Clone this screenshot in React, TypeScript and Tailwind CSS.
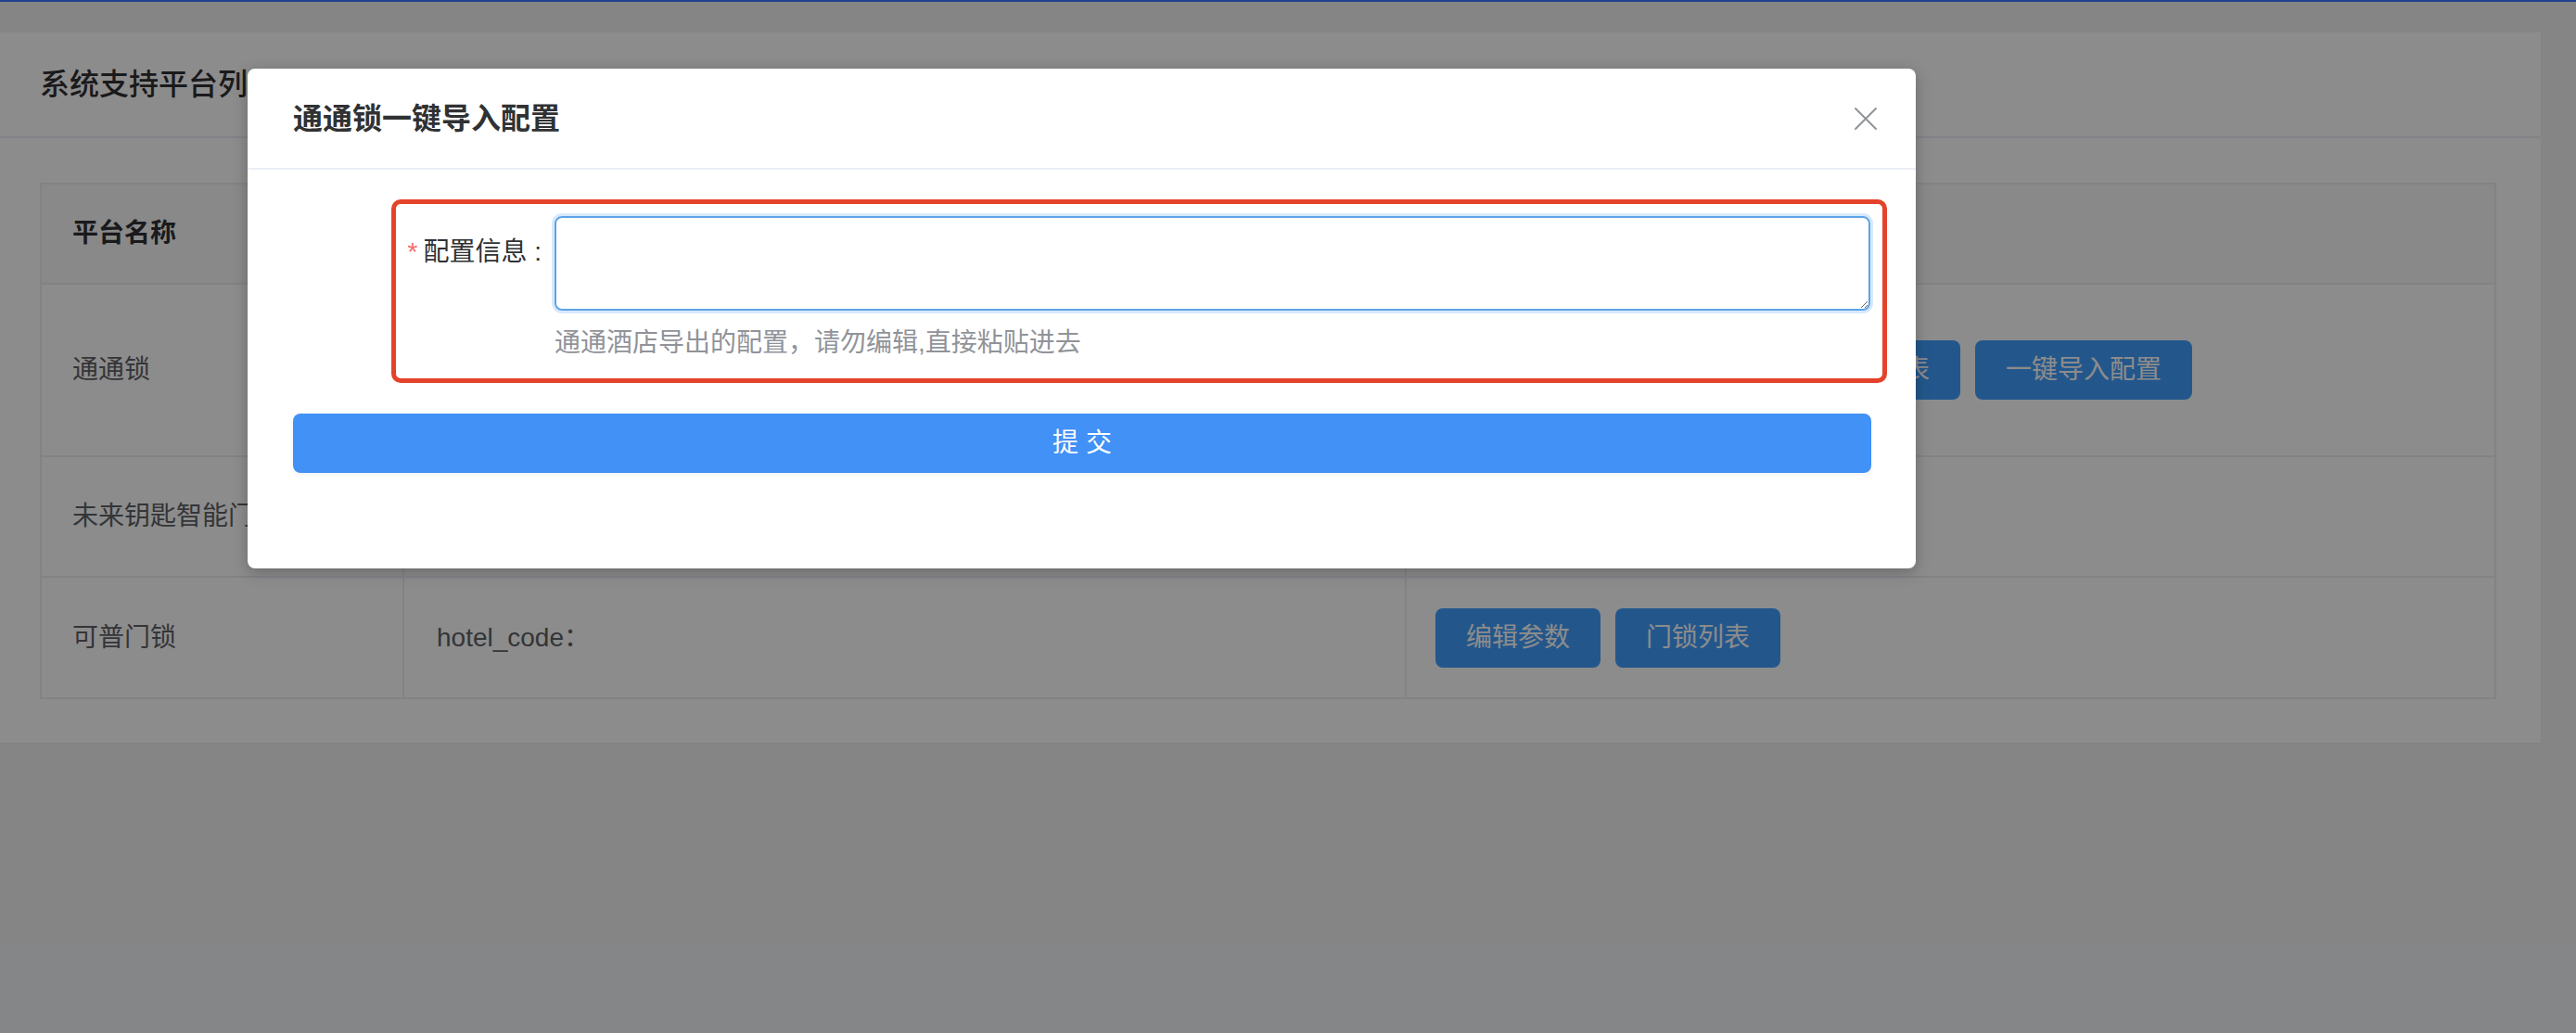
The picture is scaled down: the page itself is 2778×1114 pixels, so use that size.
const rows = [
  { name: "通通锁", params: ["app_id：", "app_secret："], buttons: ["编辑参数", "绑定房间", "门锁列表", "一键导入配置"], height: "h-[186px]" },
  { name: "未来钥匙智能门锁", params: ["hotel_id："], buttons: ["编辑参数", "门锁列表"], height: "h-[130px]" },
  { name: "可普门锁", params: ["hotel_code："], buttons: ["编辑参数", "门锁列表"], height: "h-[131px]" },
];

function PrimaryButton({ label }: { label: string }) {
  return (
    <button className="h-[64px] px-[33px] rounded-[8px] bg-[#409eff] text-white text-[28px] leading-none whitespace-nowrap">
      {label}
    </button>
  );
}

function CloseIcon() {
  return (
    <svg width="26" height="26" viewBox="0 0 26 26" className="text-[#909399]">
      <path d="M2 2 L24 24 M24 2 L2 24" stroke="currentColor" strokeWidth="2" strokeLinecap="round" />
    </svg>
  );
}

function PlatformCard() {
  return (
    <div className="mt-[33px] w-[2740px] bg-white border-b-2 border-[#ebeef5]">
      <div className="h-[114px] flex items-center pl-[43px] border-b-2 border-[#ebeef5]">
        <h2 className="text-[32px] font-medium text-[#303133]">系统支持平台列表</h2>
      </div>
      <div className="pl-[43px] pr-[48px] pt-[48px] pb-[47px]">
        <table className="w-full table-fixed border-collapse border-2 border-[#ebeef5] text-[28px] text-[#606266]">
          <colgroup>
            <col className="w-[391px]" />
            <col className="w-[1081px]" />
            <col />
          </colgroup>
          <thead>
            <tr className="h-[108px] bg-[#fafafa]">
              <th className="text-left font-semibold text-[#303133] px-[33px] border-2 border-[#ebeef5]">平台名称</th>
              <th className="text-left font-semibold text-[#303133] px-[33px] border-2 border-[#ebeef5]">参数</th>
              <th className="text-left font-semibold text-[#303133] px-[33px] border-2 border-[#ebeef5]">操作</th>
            </tr>
          </thead>
          <tbody>
            {rows.map((row) => (
              <tr key={row.name} className={row.height}>
                <td className="px-[33px] border-2 border-[#ebeef5] whitespace-nowrap overflow-hidden">{row.name}</td>
                <td className="px-[35px] border-2 border-[#ebeef5]">
                  {row.params.map((p) => (
                    <div key={p} className="leading-[56px]">{p}</div>
                  ))}
                </td>
                <td className="px-[31px] border-2 border-[#ebeef5]">
                  <div className="flex gap-[16px]">
                    {row.buttons.map((b) => (
                      <PrimaryButton key={b} label={b} />
                    ))}
                  </div>
                </td>
              </tr>
            ))}
          </tbody>
        </table>
      </div>
    </div>
  );
}

function ImportDialog() {
  return (
    <div className="absolute left-[267px] top-[74px] w-[1799px] z-20 bg-white rounded-[8px] shadow-[0_4px_16px_rgba(0,0,0,0.25)]">
      <div className="h-[109px] flex items-center justify-between pl-[49px] pr-[41px] border-b-2 border-[#ebeef5]">
        <span className="text-[32px] font-semibold text-[#303133]">通通锁一键导入配置</span>
        <CloseIcon />
      </div>
      <div className="pl-[49px] pr-[48px] pt-[32px] pb-[103px]">
        <div className="ml-[106px] mr-[-17px] border-[5px] border-[#e4432b] rounded-[10px] pt-[13px] pr-[13px] pb-[10px] flex">
          <div className="w-[171px] shrink-0 flex justify-end pr-[14px] leading-[78px] text-[28px] text-[#303133] whitespace-pre">
            <span className="text-[#f56c6c] mr-[6px]">*</span>
            <span>配置信息 :</span>
          </div>
          <div className="flex-1">
            <textarea
              className="block w-full h-[102px] rounded-[8px] border-2 border-[#5da3e9] shadow-[0_0_0_3px_#d8e9fc] outline-none resize-y px-[20px] py-[10px] text-[28px]"
              defaultValue=""
            />
            <div className="mt-[7px] leading-[56px] text-[28px] text-[#909399]">通通酒店导出的配置，请勿编辑,直接粘贴进去</div>
          </div>
        </div>
        <button className="mt-[33px] w-full h-[64px] rounded-[8px] bg-[#4191f6] text-white text-[28px] shadow-[0_2px_4px_rgba(0,0,0,0.06)]">
          提 交
        </button>
      </div>
    </div>
  );
}

export default function App() {
  return (
    <div className="relative h-[1114px] overflow-hidden bg-[#f2f3f5] font-['Liberation_Sans','Noto_Sans_CJK_SC',sans-serif]">
      <div className="relative z-30 h-[2px] bg-[#23408e]" />
      <PlatformCard />
      <div className="absolute inset-0 z-10 bg-black/45" />
      <ImportDialog />
    </div>
  );
}
